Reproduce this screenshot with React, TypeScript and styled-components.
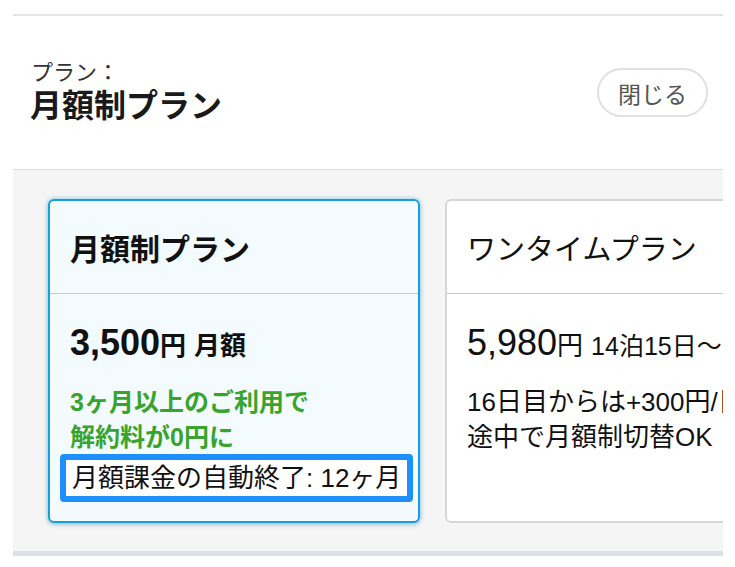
import React from "react";
import styled, { createGlobalStyle } from "styled-components";

const Global = createGlobalStyle`
  html, body { margin: 0; padding: 0; background: #ffffff; }
  body {
    font-family: "Liberation Sans", "Noto Sans CJK JP", sans-serif;
    color: #111;
  }
`;

const Page = styled.div`
  margin: 14px 12px 0 13px;
  width: 710px;
`;

const Header = styled.header`
  border-top: 2px solid #e2e5e8;
  height: 153px;
  padding: 0 15px 0 17px;
  display: flex;
  align-items: center;
  justify-content: space-between;
`;

const TitleBlock = styled.div`
  display: flex;
  flex-direction: column;
`;

const Label = styled.div`
  font-size: 22px;
  line-height: 27px;
  color: #333;
  padding-left: 1px;
`;

const Title = styled.h1`
  margin: 0;
  font-size: 32px;
  line-height: 40px;
  font-weight: 700;
  color: #1a1a1a;
`;

const CloseButton = styled.button`
  width: 111px;
  height: 49px;
  border: 2px solid #e0e0e0;
  border-radius: 25px;
  background: #fff;
  font-family: inherit;
  font-size: 23px;
  color: #555;
  padding: 0;
`;

const Plans = styled.section`
  border-top: 1px solid #d9dde1;
  border-bottom: 5px solid #dde1e5;
  background: #f5f5f5;
  padding: 29px 0 28px 35px;
  display: flex;
  gap: 25px;
  overflow: hidden;
`;

const Card = styled.div<{ $selected?: boolean }>`
  width: 372px;
  flex-shrink: 0;
  box-sizing: border-box;
  border-radius: 6px;
  border: 2px solid ${(p) => (p.$selected ? "#1a9ed9" : "#d6d6d6")};
  background: ${(p) => (p.$selected ? "#f3fbfe" : "#ffffff")};
  box-shadow: ${(p) =>
    p.$selected
      ? "0 0 4px 1px rgba(26,158,217,0.35), 0 2px 4px rgba(0,0,0,0.12)"
      : "none"};
  display: flex;
  flex-direction: column;
`;

const CardHead = styled.div<{ $bold?: boolean }>`
  height: 93px;
  box-sizing: border-box;
  border-bottom: 1px solid #c4c8cc;
  padding: 0 20px;
  display: flex;
  align-items: center;
  font-size: ${(p) => (p.$bold ? 30 : 29)}px;
  font-weight: ${(p) => (p.$bold ? 700 : 400)};
  white-space: nowrap;
`;

const CardBody = styled.div`
  padding: 25px 8px 19px 20px;
  white-space: nowrap;
`;

const Price = styled.div<{ $bold?: boolean }>`
  line-height: 48px;
  font-weight: ${(p) => (p.$bold ? 700 : 400)};
`;

const Amount = styled.span`
  font-size: 36px;
`;

const Unit = styled.span`
  font-size: 26px;
`;

const Note = styled.span<{ $size?: number }>`
  font-size: ${(p) => p.$size ?? 26}px;
  margin-left: 8px;
`;

const Lines = styled.div<{ $green?: boolean }>`
  margin-top: 11px;
  font-size: ${(p) => (p.$green ? 25 : 26)}px;
  line-height: 35px;
  font-weight: ${(p) => (p.$green ? 700 : 400)};
  color: ${(p) => (p.$green ? "#39a42d" : "#111")};
`;

const Highlight = styled.div`
  display: inline-block;
  margin: -1px 0 0 -10px;
  border: 6px solid #1e8fff;
  border-radius: 4px;
  background: #fff;
  padding: 0 6px;
  font-size: 26px;
  line-height: 36px;
  color: #111;
`;

export default function App() {
  return (
    <>
      <Global />
      <Page>
        <Header>
          <TitleBlock>
            <Label>プラン：</Label>
            <Title>月額制プラン</Title>
          </TitleBlock>
          <CloseButton>閉じる</CloseButton>
        </Header>
        <Plans>
          <Card $selected>
            <CardHead $bold>月額制プラン</CardHead>
            <CardBody>
              <Price $bold>
                <Amount>3,500</Amount>
                <Unit>円</Unit>
                <Note>月額</Note>
              </Price>
              <Lines $green>
                <div>3ヶ月以上のご利用で</div>
                <div>解約料が0円に</div>
              </Lines>
              <Highlight>月額課金の自動終了: 12ヶ月</Highlight>
            </CardBody>
          </Card>
          <Card>
            <CardHead>ワンタイムプラン</CardHead>
            <CardBody>
              <Price>
                <Amount>5,980</Amount>
                <Unit>円</Unit>
                <Note $size={25}>14泊15日〜</Note>
              </Price>
              <Lines>
                <div>16日目からは+300円/日</div>
                <div>途中で月額制切替OK</div>
              </Lines>
            </CardBody>
          </Card>
        </Plans>
      </Page>
    </>
  );
}
